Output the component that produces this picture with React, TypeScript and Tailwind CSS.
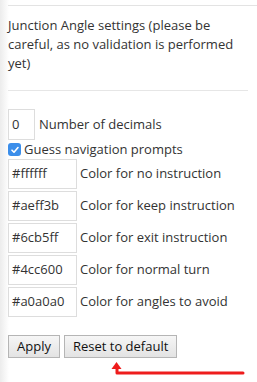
import React from "react";

const colors = [
  { value: "#ffffff", label: "Color for no instruction" },
  { value: "#aeff3b", label: "Color for keep instruction" },
  { value: "#6cb5ff", label: "Color for exit instruction" },
  { value: "#4cc600", label: "Color for normal turn" },
  { value: "#a0a0a0", label: "Color for angles to avoid" },
];

export default function App() {
  return (
    <div
      className="relative w-[257px] h-[382px] overflow-hidden bg-[linear-gradient(to_right,#ececec,#ffffff_9px)] text-[#333] text-[13px]"
      style={{ fontFamily: '"Open Sans", "Noto Sans", sans-serif' }}
    >
      <div className="pl-2 pt-[5px]">
        <hr className="border-0 border-t border-[#e3e3e3]" />
        <p className="pt-[10px] leading-[19px] pr-2">
          Junction Angle settings (please be careful, as no validation is performed yet)
        </p>
        <hr className="mt-[17px] mr-[9px] border-0 border-t border-[#e6e6e6]" />

        <div className="mt-[18px] flex items-center gap-[4px]">
          <div className="w-[27px] h-[31px] border border-[#ddd] flex items-center pl-[3px]">0</div>
          <span>Number of decimals</span>
        </div>

        <label className="mt-[1px] flex items-center gap-[3px] h-[17px]">
          <span className="w-[13px] h-[13px] rounded-[3px] bg-[#3b8eea] flex items-center justify-center">
            <svg width="10" height="10" viewBox="0 0 10 10">
              <path d="M2 5.2l2 2 4-4.6" fill="none" stroke="#fff" strokeWidth="1.6" strokeLinecap="round" strokeLinejoin="round" />
            </svg>
          </span>
          <span>Guess navigation prompts</span>
        </label>

        <div className="mt-[1px] flex flex-col gap-[2px]">
          {colors.map((c) => (
            <div key={c.value} className="flex items-center gap-[3px]">
              <div className="w-[69px] h-[30px] border border-[#ddd] flex items-center pl-[3px]">{c.value}</div>
              <span>{c.label}</span>
            </div>
          ))}
        </div>

        <div className="mt-[18px] flex gap-[4px]">
          <button className="h-[23px] px-[8px] border border-[#b5b5b5] bg-[linear-gradient(#f6f6f6,#e3e3e3)] text-[13px] text-[#111] leading-none">
            Apply
          </button>
          <button className="h-[23px] px-[8px] border border-[#b5b5b5] bg-[linear-gradient(#f6f6f6,#e3e3e3)] text-[13px] text-[#111] leading-none">
            Reset to default
          </button>
        </div>
      </div>

      <svg className="absolute left-0 top-0" width="257" height="382" viewBox="0 0 257 382">
        <path d="M243 373 H117 V367" fill="none" stroke="#ee1c1c" strokeWidth="3" strokeLinejoin="round" strokeLinecap="round" />
        <path d="M111.5 369 L116.5 362 L121.5 369 Z" fill="#ee1c1c" />
      </svg>
    </div>
  );
}
